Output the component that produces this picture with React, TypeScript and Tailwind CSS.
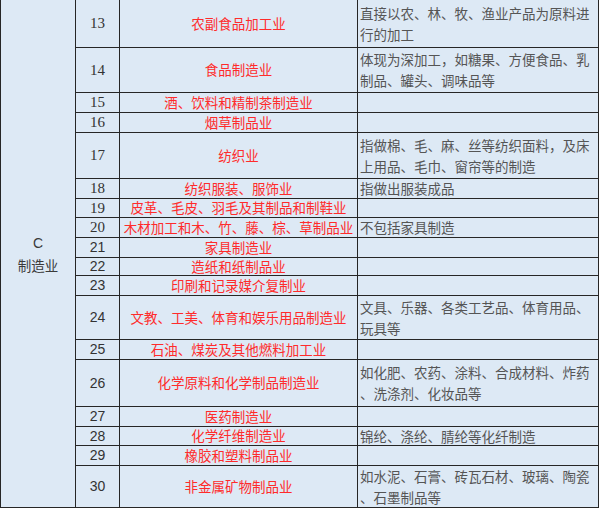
import React from "react";

type Row = {
  num: string;
  name: string;
  desc: string[];
  h: string;
  serif: boolean;
};

// row heights include the 1px bottom rule
const rows: Row[] = [
  { num: "13", name: "农副食品加工业", desc: ["直接以农、林、牧、渔业产品为原料进", "行的加工"], h: "h-[48px]", serif: true },
  { num: "14", name: "食品制造业", desc: ["体现为深加工，如糖果、方便食品、乳", "制品、罐头、调味品等"], h: "h-[45px]", serif: true },
  { num: "15", name: "酒、饮料和精制茶制造业", desc: [], h: "h-[20px]", serif: true },
  { num: "16", name: "烟草制品业", desc: [], h: "h-[20px]", serif: true },
  { num: "17", name: "纺织业", desc: ["指做棉、毛、麻、丝等纺织面料，及床", "上用品、毛巾、窗帘等的制造"], h: "h-[46px]", serif: true },
  { num: "18", name: "纺织服装、服饰业", desc: ["指做出服装成品"], h: "h-[20px]", serif: true },
  { num: "19", name: "皮革、毛皮、羽毛及其制品和制鞋业", desc: [], h: "h-[19px]", serif: true },
  { num: "20", name: "木材加工和木、竹、藤、棕、草制品业", desc: ["不包括家具制造"], h: "h-[20px]", serif: true },
  { num: "21", name: "家具制造业", desc: [], h: "h-[20px]", serif: false },
  { num: "22", name: "造纸和纸制品业", desc: [], h: "h-[18px]", serif: false },
  { num: "23", name: "印刷和记录媒介复制业", desc: [], h: "h-[20px]", serif: false },
  { num: "24", name: "文教、工美、体育和娱乐用品制造业", desc: ["文具、乐器、各类工艺品、体育用品、", "玩具等"], h: "h-[44px]", serif: false },
  { num: "25", name: "石油、煤炭及其他燃料加工业", desc: [], h: "h-[20px]", serif: false },
  { num: "26", name: "化学原料和化学制品制造业", desc: ["如化肥、农药、涂料、合成材料、炸药", "、洗涤剂、化妆品等"], h: "h-[47px]", serif: false },
  { num: "27", name: "医药制造业", desc: [], h: "h-[20px]", serif: false },
  { num: "28", name: "化学纤维制造业", desc: ["锦纶、涤纶、腈纶等化纤制造"], h: "h-[19px]", serif: false },
  { num: "29", name: "橡胶和塑料制品业", desc: [], h: "h-[20px]", serif: false },
  { num: "30", name: "非金属矿物制品业", desc: ["如水泥、石膏、砖瓦石材、玻璃、陶瓷", "、石墨制品等"], h: "h-[42px]", serif: false },
];

const cjk = "font-['Noto_Sans_CJK_SC',sans-serif]";

export default function App() {
  return (
    <div className="h-[509px] w-[600px] bg-white">
      <div className="flex w-[599px] bg-[#dde9f5] text-[#333]">
        <div className="flex w-[76px] flex-col items-center justify-center border-x border-b border-[#262626]">
          <span className="font-['Liberation_Sans',sans-serif] text-[14px] leading-[22px] text-[#3a3a3a]">C</span>
          <span className={`${cjk} text-[13.5px] leading-[22px] text-[#3a3a3a]`}>制造业</span>
        </div>
        <div className="flex flex-1 flex-col">
          {rows.map(r => (
            <div key={r.num} className={`flex ${r.h} border-b border-[#262626]`}>
              <div
                className={`flex w-[44px] items-center justify-center border-r border-[#262626] ${
                  r.serif
                    ? "font-['Liberation_Serif',serif] text-[15px]"
                    : "font-['Liberation_Sans',sans-serif] text-[14px]"
                } text-[#333]`}
              >
                {r.num}
              </div>
              <div
                className={`flex w-[238px] items-center justify-center whitespace-nowrap border-r border-[#262626] ${cjk} text-[13.5px] leading-none text-[#ff2b2b]`}
              >
                {r.name}
              </div>
              <div className={`flex w-[241px] flex-col justify-center border-r border-[#262626] pl-[2px] ${cjk} text-[13.5px] leading-[21px] text-[#555]`}>
                {r.desc.map(line => (
                  <span key={line} className="whitespace-nowrap">
                    {line}
                  </span>
                ))}
              </div>
            </div>
          ))}
        </div>
      </div>
    </div>
  );
}
